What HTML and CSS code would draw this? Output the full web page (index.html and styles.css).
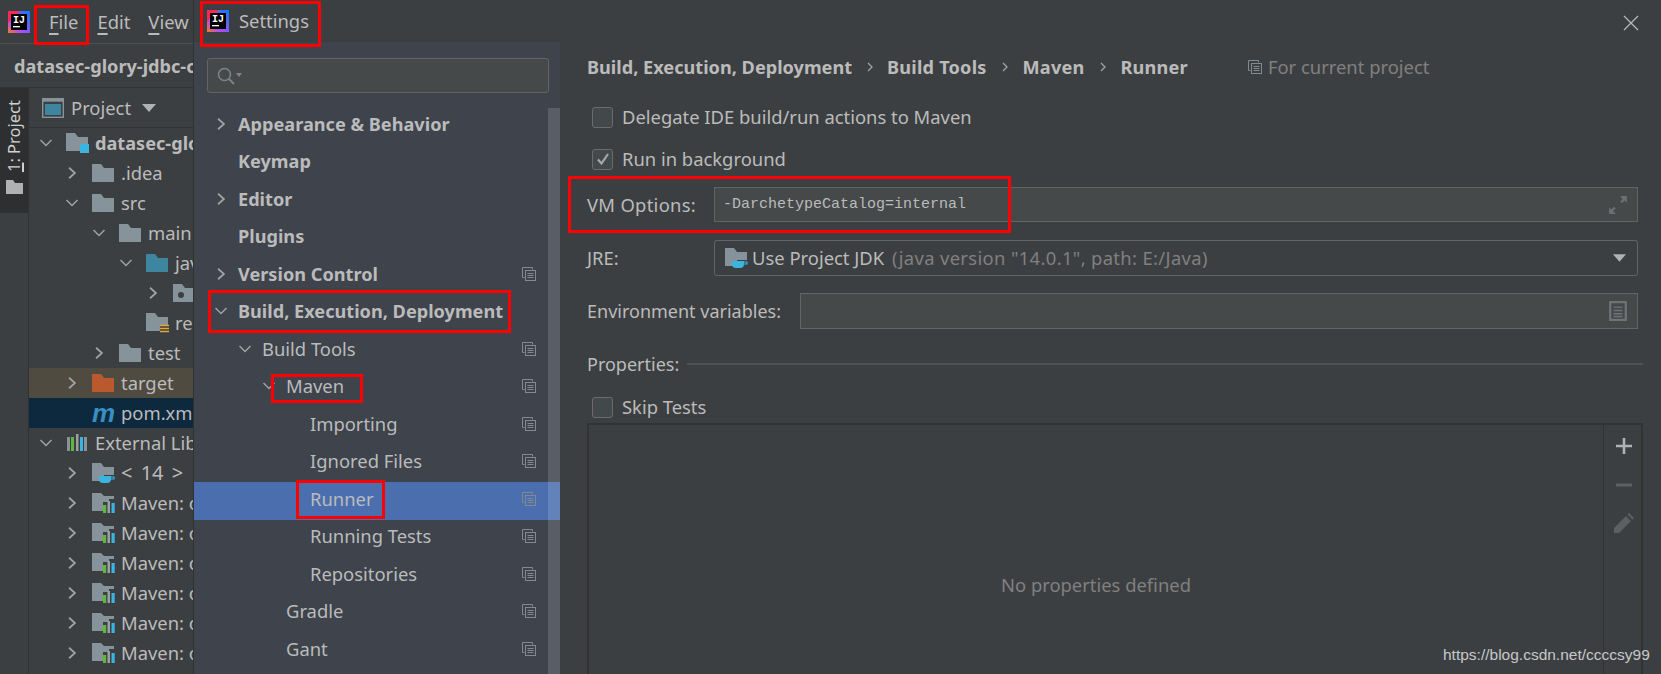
FILE: index.html
```html
<!DOCTYPE html>
<html lang="en">
<head>
<meta charset="utf-8">
<title>Settings</title>
<link rel="stylesheet" href="styles.css">
</head>
<body>
<svg class="defs" width="0" height="0" aria-hidden="true">
  <defs>
    <symbol id="logo" viewBox="0 0 22 22">
      <linearGradient id="lg1" x1="0" y1="1" x2="1" y2="0"><stop offset="0" stop-color="#f97a12"/><stop offset=".3" stop-color="#b74af7"/><stop offset="1" stop-color="#087cfa"/></linearGradient>
      <rect width="22" height="22" fill="url(#lg1)"/>
      <path d="M0 0h12L0 12z" fill="#fe2857"/>
      <rect x="3" y="3" width="16" height="16" fill="#000"/>
      <text x="5" y="11.5" class="logo-text">IJ</text>
      <rect x="5" y="15" width="7" height="1.300" fill="#fff"/>
    </symbol>
    <symbol id="chev-r" viewBox="0 0 12 12"><path d="M3.500 1.500 8.500 6l-5 4.500" fill="none" stroke="#a0a3a5" stroke-width="1.500"/></symbol>
    <symbol id="chev-d" viewBox="0 0 14 12"><path d="M1.500 3 7 8.500 12.500 3" fill="none" stroke="#a0a3a5" stroke-width="1.500"/></symbol>
    <symbol id="folder" viewBox="0 0 22 20"><path d="M0 1h9l3 4h10v14H0z" fill="#87939a"/></symbol>
    <symbol id="folder-blue" viewBox="0 0 22 20"><path d="M0 1h9l3 4h10v14H0z" fill="#3e86a0"/></symbol>
    <symbol id="folder-orange" viewBox="0 0 22 20"><path d="M0 1h9l3 4h10v14H0z" fill="#b85a2e"/></symbol>
    <symbol id="folder-module" viewBox="0 0 24 22"><path d="M0 1h9l3 4h10v14H0z" fill="#87939a"/><rect x="14" y="12" width="9" height="9" fill="#3cb4e0"/></symbol>
    <symbol id="folder-pkg" viewBox="0 0 22 20"><path d="M0 1h9l3 4h10v14H0z" fill="#87939a"/><circle cx="8" cy="12" r="3" fill="#3c3f41"/></symbol>
    <symbol id="folder-res" viewBox="0 0 24 22"><path d="M0 1h9l3 4h10v8h-8v6H0z" fill="#87939a"/><path d="M14 13.500h9M14 16.500h9M14 19.500h9" stroke="#e0a93a" stroke-width="1.600"/></symbol>
    <symbol id="folder-jdk" viewBox="0 0 24 22"><path d="M0 1h9l3 4h10v8H12v6H0z" fill="#87939a"/><path d="M7 14h12v3a4 4 0 0 1-4 4h-4a4 4 0 0 1-4-4z" fill="#3cb4e0"/><path d="M19 15h3v2h-3" fill="none" stroke="#3cb4e0" stroke-width="1.200"/></symbol>
    <symbol id="folder-lib" viewBox="0 0 24 22"><path d="M0 1h9l3 3h10v3h-5v3h-6v9H0z" fill="#87939a"/><rect x="11" y="13" width="3.200" height="8" fill="#5fb83a"/><rect x="15.500" y="9" width="2.500" height="12" fill="#9aa0a4"/><rect x="19.500" y="11" width="3.200" height="10" fill="#3cb4e0"/></symbol>
    <symbol id="bars" viewBox="0 0 22 20"><rect x="1" y="4" width="3" height="14" fill="#87939a"/><rect x="5" y="4" width="3" height="14" fill="#5fb83a"/><rect x="10" y="1" width="2.500" height="17" fill="#9aa0a4"/><rect x="14" y="4" width="3" height="14" fill="#3cb4e0"/><rect x="18" y="4" width="3" height="14" fill="#87939a"/></symbol>
    <symbol id="copy" viewBox="0 0 14 14"><path d="M.5.500h10v2M.5.500v10h2" fill="none" stroke="#808a90" stroke-width="1"/><rect x="3.500" y="3.500" width="10" height="10" fill="none" stroke="#808a90" stroke-width="1"/><path d="M5.500 6.500h6M5.500 8.500h6M5.500 10.500h6" stroke="#808a90" stroke-width="1"/></symbol>
  </defs>
</svg>

<div class="ide">
  <div class="menubar">
    <svg class="logo"><use href="#logo"/></svg>
    <span class="menu-item menu-file"><u>F</u>ile</span>
    <span class="menu-item menu-edit"><u>E</u>dit</span>
    <span class="menu-item menu-view"><u>V</u>iew</span>
  </div>
  <div class="navbar">datasec-glory-jdbc-c</div>
  <div class="ide-body">
    <div class="stripe">
      <div class="stripe-tab">
        <span class="stripe-label"><u>1</u>: Project</span>
        <svg class="stripe-folder" viewBox="0 0 17 14"><path d="M0 0h7l2 3h8v11H0z" fill="#afb1b3"/></svg>
      </div>
    </div>
    <div class="project">
      <div class="project-head">
        <svg class="project-icon" viewBox="0 0 22 20"><rect x=".7" y=".7" width="20.600" height="18.600" fill="none" stroke="#87939a" stroke-width="1.400"/><rect x=".7" y=".7" width="20.600" height="3" fill="#87939a"/><rect x="3" y="6" width="16" height="11" fill="#3e86a0"/></svg>
        <span>Project</span>
        <svg class="project-caret" viewBox="0 0 14 8"><path d="M0 0h14L7 8z" fill="#afb1b3"/></svg>
      </div>
      <div class="tree">
        <div class="node l0"><svg class="tw-d"><use href="#chev-d"/></svg><svg class="ic ic-mod"><use href="#folder-module"/></svg><b>datasec-glory</b></div>
        <div class="node l1"><svg class="tw"><use href="#chev-r"/></svg><svg class="ic"><use href="#folder"/></svg><span>.idea</span></div>
        <div class="node l1"><svg class="tw-d"><use href="#chev-d"/></svg><svg class="ic"><use href="#folder"/></svg><span>src</span></div>
        <div class="node l2"><svg class="tw-d"><use href="#chev-d"/></svg><svg class="ic"><use href="#folder"/></svg><span>main</span></div>
        <div class="node l3"><svg class="tw-d"><use href="#chev-d"/></svg><svg class="ic"><use href="#folder-blue"/></svg><span>java</span></div>
        <div class="node l4"><svg class="tw"><use href="#chev-r"/></svg><svg class="ic"><use href="#folder-pkg"/></svg></div>
        <div class="node l3"><span class="tw-none"></span><svg class="ic ic-mod"><use href="#folder-res"/></svg><span>res</span></div>
        <div class="node l2"><svg class="tw"><use href="#chev-r"/></svg><svg class="ic"><use href="#folder"/></svg><span>test</span></div>
        <div class="node l1 node-excluded"><svg class="tw"><use href="#chev-r"/></svg><svg class="ic"><use href="#folder-orange"/></svg><span>target</span></div>
        <div class="node l1 node-selected"><span class="tw-none"></span><span class="maven-m">m</span><span>pom.xml</span></div>
        <div class="node l0"><svg class="tw-d"><use href="#chev-d"/></svg><svg class="ic"><use href="#bars"/></svg><span>External Lib</span></div>
        <div class="node l1"><svg class="tw"><use href="#chev-r"/></svg><svg class="ic ic-mod"><use href="#folder-jdk"/></svg><span class="jdk-name">&lt; 14 &gt;</span><span class="muted jdk-path">E</span></div>
        <div class="node l1"><svg class="tw"><use href="#chev-r"/></svg><svg class="ic ic-mod"><use href="#folder-lib"/></svg><span>Maven: o</span></div>
        <div class="node l1"><svg class="tw"><use href="#chev-r"/></svg><svg class="ic ic-mod"><use href="#folder-lib"/></svg><span>Maven: o</span></div>
        <div class="node l1"><svg class="tw"><use href="#chev-r"/></svg><svg class="ic ic-mod"><use href="#folder-lib"/></svg><span>Maven: o</span></div>
        <div class="node l1"><svg class="tw"><use href="#chev-r"/></svg><svg class="ic ic-mod"><use href="#folder-lib"/></svg><span>Maven: o</span></div>
        <div class="node l1"><svg class="tw"><use href="#chev-r"/></svg><svg class="ic ic-mod"><use href="#folder-lib"/></svg><span>Maven: o</span></div>
        <div class="node l1"><svg class="tw"><use href="#chev-r"/></svg><svg class="ic ic-mod"><use href="#folder-lib"/></svg><span>Maven: o</span></div>
      </div>
    </div>
  </div>
</div>

<div class="dialog">
  <div class="titlebar">
    <svg class="logo"><use href="#logo"/></svg>
    <span class="title-text">Settings</span>
    <svg class="close" viewBox="0 0 16 16"><path d="M1 1l14 14M15 1 1 15" stroke="#b5b7b9" stroke-width="1.300" fill="none"/></svg>
  </div>
  <div class="dialog-body">
    <aside class="sidebar">
      <div class="search-wrap">
        <div class="search">
          <svg class="search-icon" viewBox="0 0 26 18"><circle cx="7.500" cy="7.500" r="6" fill="none" stroke="#7f8588" stroke-width="1.500"/><path d="M12 12l5 5" stroke="#7f8588" stroke-width="1.800"/><path d="M19 6h6l-3 4z" fill="#7f8588"/></svg>
        </div>
      </div>
      <div class="rows">
        <div class="row lv0 strong"><svg class="tw"><use href="#chev-r"/></svg><span>Appearance &amp; Behavior</span></div>
        <div class="row lv0 strong"><span class="tw-none"></span><span>Keymap</span></div>
        <div class="row lv0 strong"><svg class="tw"><use href="#chev-r"/></svg><span>Editor</span></div>
        <div class="row lv0 strong"><span class="tw-none"></span><span>Plugins</span></div>
        <div class="row lv0 strong"><svg class="tw"><use href="#chev-r"/></svg><span>Version Control</span><svg class="copy"><use href="#copy"/></svg></div>
        <div class="row lv0 strong"><svg class="tw-d"><use href="#chev-d"/></svg><span>Build, Execution, Deployment</span></div>
        <div class="row lv1"><svg class="tw-d"><use href="#chev-d"/></svg><span>Build Tools</span><svg class="copy"><use href="#copy"/></svg></div>
        <div class="row lv2"><svg class="tw-d"><use href="#chev-d"/></svg><span>Maven</span><svg class="copy"><use href="#copy"/></svg></div>
        <div class="row lv3"><span class="tw-none"></span><span>Importing</span><svg class="copy"><use href="#copy"/></svg></div>
        <div class="row lv3"><span class="tw-none"></span><span>Ignored Files</span><svg class="copy"><use href="#copy"/></svg></div>
        <div class="row lv3 row-active"><span class="tw-none"></span><span>Runner</span><svg class="copy"><use href="#copy"/></svg></div>
        <div class="row lv3"><span class="tw-none"></span><span>Running Tests</span><svg class="copy"><use href="#copy"/></svg></div>
        <div class="row lv3"><span class="tw-none"></span><span>Repositories</span><svg class="copy"><use href="#copy"/></svg></div>
        <div class="row lv2"><span class="tw-none"></span><span>Gradle</span><svg class="copy"><use href="#copy"/></svg></div>
        <div class="row lv2"><span class="tw-none"></span><span>Gant</span><svg class="copy"><use href="#copy"/></svg></div>
      </div>
      <div class="scrollbar"></div>
    </aside>
    <main class="pane">
      <div class="crumbs">
        <b>Build, Execution, Deployment</b>
        <svg class="crumb-sep crumb-sep-first" viewBox="0 0 8 12"><path d="M2 2l4 4-4 4" fill="none" stroke="#a0a3a5" stroke-width="1.300"/></svg>
        <b>Build Tools</b>
        <svg class="crumb-sep" viewBox="0 0 8 12"><path d="M2 2l4 4-4 4" fill="none" stroke="#a0a3a5" stroke-width="1.300"/></svg>
        <b>Maven</b>
        <svg class="crumb-sep" viewBox="0 0 8 12"><path d="M2 2l4 4-4 4" fill="none" stroke="#a0a3a5" stroke-width="1.300"/></svg>
        <b>Runner</b>
        <svg class="crumb-copy"><use href="#copy"/></svg>
        <span class="crumb-scope">For current project</span>
      </div>
      <div class="form">
        <label class="check check-first"><span class="box"></span>Delegate IDE build/run actions to Maven</label>
        <label class="check check-second"><span class="box"><svg class="tick" viewBox="0 0 14 14"><path d="M2 7.500 5.500 11.500 12 2" fill="none" stroke="#a7a9ab" stroke-width="2.200"/></svg></span>Run in background</label>
        <div class="field field-vm">
          <span class="field-label field-label-vm">VM Options:</span>
          <div class="input input-mono">-DarchetypeCatalog=internal
            <svg class="input-icon" viewBox="0 0 18 18"><path d="M11 1h6v6l-2-2-2.500 2.500-1.500-1.500L13 3.500zM7 17H1v-6l2 2 2.500-2.500L7 12l-2.500 2.500z" fill="#6b6f71"/></svg>
          </div>
        </div>
        <div class="field field-jre">
          <span class="field-label">JRE:</span>
          <div class="combo">
            <svg class="combo-icon"><use href="#folder-jdk"/></svg>
            <span>Use Project JDK</span><span class="muted jre-detail">(java version "14.0.1", path: E:/Java)</span>
            <svg class="combo-caret" viewBox="0 0 14 8"><path d="M0 0h14L7 8z" fill="#afb1b3"/></svg>
          </div>
        </div>
        <div class="field field-env">
          <span class="field-label field-label-wide">Environment variables:</span>
          <div class="input">
            <svg class="input-icon" viewBox="0 0 16 18"><rect x="1" y="1" width="14" height="16" fill="none" stroke="#6f7375" stroke-width="2"/><path d="M4 5.500h8M4 8.500h8M4 11.500h8M4 14h8" stroke="#6f7375" stroke-width="1.300"/></svg>
          </div>
        </div>
        <div class="group-title"><span>Properties:</span><span class="group-line"></span></div>
        <label class="check check-skip"><span class="box"></span>Skip Tests</label>
        <div class="table">
          <div class="table-body">No properties defined</div>
          <div class="table-tools">
            <svg class="tool tool-add" viewBox="0 0 16 16"><path d="M8 0v16M0 8h16" stroke="#afb1b3" stroke-width="2.600"/></svg>
            <svg class="tool tool-remove" viewBox="0 0 16 4"><rect width="16" height="3" y=".5" fill="#5d6062"/></svg>
            <svg class="tool tool-edit" viewBox="0 0 20 20"><path d="M0 20v-5L12 3l5 5L5 20zM13.500 1.500 15 0l5 5-1.500 1.500z" fill="#5d6062"/></svg>
          </div>
        </div>
      </div>
    </main>
  </div>
</div>

<div class="mark mark-file"></div>
<div class="mark mark-settings"></div>
<div class="mark mark-build"></div>
<div class="mark mark-maven"></div>
<div class="mark mark-runner"></div>
<div class="mark mark-vm"></div>
<div class="watermark">https://blog.csdn.net/ccccsy99</div>
</body>
</html>
```
FILE: styles.css
```css
* { box-sizing: border-box; }
html, body { margin: 0; height: 100%; }
body {
  position: relative;
  display: flex;
  width: 1661px;
  height: 674px;
  overflow: hidden;
  background: #3c3f41;
  color: #bbbbbb;
  font: 18.4px/24px "Noto Sans", "Open Sans", sans-serif;
}
.defs { position: absolute; }
.logo-text { font: 700 10px "Liberation Mono", monospace; fill: #fff; }
svg { flex: none; display: block; }
u { text-underline-offset: 4px; text-decoration-thickness: 2px; }
b, .strong { font-weight: 700; font-size: 18.15px; }

/* left IDE window */
.ide { width: 193px; flex: none; display: flex; flex-direction: column; overflow: hidden; }
.menubar { height: 44px; flex: none; display: flex; align-items: center; padding-left: 8px; border-bottom: 1px solid #515151; }
.logo { width: 22px; height: 22px; }
.menu-item { white-space: nowrap; }
.menu-file { margin-left: 19px; }
.menu-edit { margin-left: 19px; }
.menu-view { margin-left: 18px; }
.navbar { height: 44px; flex: none; display: flex; align-items: center; padding-left: 14px; font-weight: 700; font-size: 18.15px; white-space: nowrap; border-bottom: 1px solid #323232; }
.ide-body { flex: 1; display: flex; min-height: 0; }
.stripe { width: 29px; flex: none; border-right: 1px solid #323232; }
.stripe-tab { height: 125px; background: #2d2f31; display: flex; flex-direction: column; align-items: center; padding-top: 12px; }
.stripe-label { writing-mode: vertical-rl; transform: rotate(180deg); font-size: 16.5px; line-height: 20px; color: #d0d0d0; white-space: nowrap; }
.stripe-label u { text-underline-offset: 0; }
.stripe-folder { width: 17px; height: 14px; margin-top: 8px; }
.project { flex: 1; min-width: 0; }
.project-head { height: 40px; display: flex; align-items: center; padding-left: 13px; border-bottom: 1px solid #323232; white-space: nowrap; }
.project-icon { width: 22px; height: 20px; margin-right: 7px; }
.project-caret { width: 14px; height: 8px; margin-left: 11px; }
.node { height: 30px; display: flex; align-items: center; white-space: nowrap; width: 164px; overflow: hidden; }
.l0 { padding-left: 10px; }
.l1 { padding-left: 36px; }
.l2 { padding-left: 63px; }
.l3 { padding-left: 90px; }
.l4 { padding-left: 117px; }
.node .tw, .node .tw-d, .node .tw-none { margin-right: 13px; }
.tw { width: 14px; height: 14px; }
.tw-d { width: 14px; height: 12px; }
.tw-none { width: 14px; flex: none; }
.ic { width: 22px; height: 20px; margin-right: 7px; }
.ic-mod { width: 24px; height: 22px; margin-right: 5px; }
.node-excluded { background: #4f4b41; }
.node-selected { background: #0d293e; }
.maven-m { width: 22px; margin-right: 7px; color: #3a8fc0; font: italic 700 26px/24px "Liberation Sans", sans-serif; }
.jdk-name { font-size: 20px; word-spacing: 3px; }
.jdk-path { margin-left: 10px; }

/* dialog */
.dialog { flex: 1; min-width: 0; display: flex; flex-direction: column; border-left: 1px solid #2f3133; }
.titlebar { height: 42px; flex: none; display: flex; align-items: center; padding-left: 13px; padding-right: 22px; }
.title-text { margin-left: 10px; }
.close { width: 16px; height: 16px; margin-left: auto; margin-top: 4px; }
.dialog-body { flex: 1; display: flex; min-height: 0; }
.sidebar { position: relative; width: 366px; flex: none; background: #3e434c; }
.search-wrap { height: 65px; padding: 16px 11px 0 13px; }
.search { height: 35px; border: 1px solid #646464; border-radius: 3px; background: #45494a; display: flex; align-items: center; padding-left: 9px; }
.search-icon { width: 26px; height: 18px; }
.row { height: 37.5px; display: flex; align-items: center; padding-right: 24px; padding-bottom: 4px; white-space: nowrap; }
.lv0 { padding-left: 20px; }
.lv1 { padding-left: 44px; }
.lv2 { padding-left: 68px; }
.lv3 { padding-left: 92px; }
.row .tw, .row .tw-d, .row .tw-none { margin-right: 10px; }
.row-active { background: #4b6eaf; }
.copy { width: 14px; height: 14px; margin-left: auto; }
.scrollbar { position: absolute; top: 66px; bottom: 0; right: 0; width: 12px; background: rgba(255, 255, 255, .14); }
.pane { flex: 1; min-width: 0; display: flex; flex-direction: column; padding: 0 18px 0 27px; }
.crumbs { height: 50px; flex: none; display: flex; align-items: center; white-space: nowrap; }
.crumb-sep { width: 8px; height: 12px; margin: 0 14px; }
.crumb-sep-first { margin-right: 13px; }
.crumb-sep + b { letter-spacing: .2px; }
.crumb-copy { width: 14px; height: 14px; margin-left: 60px; margin-right: 6px; }
.crumb-scope { color: #808080; }
.form { flex: 1; min-height: 0; display: flex; flex-direction: column; padding-top: 15px; }
.check { height: 20px; display: flex; align-items: center; padding-left: 5px; white-space: nowrap; }
.check-second { margin-top: 22px; }
.check-skip { margin-top: 21px; }
.box { width: 21px; height: 21px; flex: none; margin-right: 9px; border: 1px solid #6b6b6b; border-radius: 3px; background: #43494a; display: flex; align-items: center; justify-content: center; }
.tick { width: 14px; height: 14px; }
.field { display: flex; align-items: center; margin-right: 5px; }
.field-vm { height: 35px; margin-top: 18px; }
.field-jre { height: 36px; margin-top: 18px; }
.field-env { height: 36px; margin-top: 17px; }
.field-label { width: 127px; flex: none; white-space: nowrap; }
.field-label-vm { letter-spacing: .3px; }
.field-label-wide { width: 213px; font-size: 18px; }
.input { flex: 1; height: 100%; display: flex; align-items: center; justify-content: space-between; padding: 0 9px 0 8px; background: #45494a; border: 1px solid #646464; }
.input-mono { font: 15px/24px "Liberation Mono", monospace; }
.input-icon { width: 20px; height: 20px; margin-left: auto; }
.combo { flex: 1; height: 100%; display: flex; align-items: center; padding: 0 11px 0 10px; border: 1px solid #646464; border-radius: 3px; white-space: pre; }
.combo-icon { width: 24px; height: 22px; margin-right: 3px; }
.combo-caret { width: 13px; height: 8px; margin-left: auto; }
.muted { color: #808080; }
.jre-detail { margin-left: 8px; letter-spacing: .35px; }
.group-title { height: 24px; margin-top: 23px; display: flex; align-items: center; font-size: 18px; }
.group-line { flex: 1; height: 2px; margin-left: 8px; background: #4f5153; }
.table { flex: 1; min-height: 0; margin-top: 6px; display: flex; border: 2px solid #323232; border-bottom: 0; }
.table-body { flex: 1; display: flex; align-items: center; justify-content: center; color: #808080; padding-top: 70px; }
.table-tools { width: 38px; flex: none; border-left: 1px solid #323232; display: flex; flex-direction: column; align-items: center; padding-left: 3px; }
.tool-add { width: 16px; height: 16px; margin-top: 13px; }
.tool-remove { width: 16px; height: 4px; margin-top: 29px; }
.tool-edit { width: 20px; height: 20px; margin-top: 26px; }

/* annotation overlays */
.mark { position: absolute; border: 3px solid #f00; pointer-events: none; }
.mark-file { left: 34px; top: 5px; width: 55px; height: 40px; }
.mark-settings { left: 200px; top: 1px; width: 121px; height: 46px; }
.mark-build { left: 208px; top: 290px; width: 303px; height: 43px; }
.mark-maven { left: 271px; top: 374px; width: 92px; height: 29px; }
.mark-runner { left: 296px; top: 480px; width: 89px; height: 39px; }
.mark-vm { left: 568px; top: 176px; width: 443px; height: 57px; }
.watermark { position: absolute; left: 1443px; top: 644px; font: 15.5px/22px "Liberation Sans", sans-serif; color: #c6c8c9; white-space: nowrap; }
```
